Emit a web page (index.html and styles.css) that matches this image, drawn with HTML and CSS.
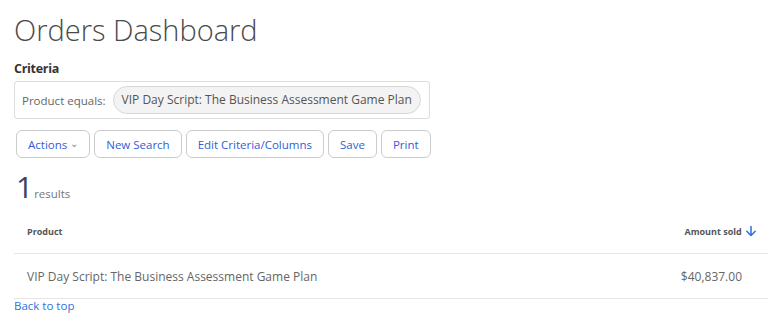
FILE: index.html
```html
<!DOCTYPE html>
<html lang="en">
<head>
    <meta charset="UTF-8">
    <meta name="viewport" content="width=device-width, initial-scale=1.0">
    <title>Orders Dashboard</title>
    <link rel="stylesheet" href="styles.css">
</head>
<body>
    <h1 class="page-title">Orders Dashboard</h1>

    <div class="criteria">
        <h4 class="criteria-label">Criteria</h4>
        <div class="criteria-box">
            <span class="criteria-field">Product equals:</span>
            <span class="chip">VIP Day Script: The Business Assessment Game Plan</span>
        </div>
    </div>

    <div class="toolbar">
        <button class="btn">Actions <span class="caret">&#8964;</span></button>
        <button class="btn">New Search</button>
        <button class="btn">Edit Criteria/Columns</button>
        <button class="btn">Save</button>
        <button class="btn">Print</button>
    </div>

    <div class="count"><span class="count-num">1</span><span class="count-label">results</span></div>

    <table class="results">
        <thead>
            <tr>
                <th>Product</th>
                <th class="num">Amount sold
                    <svg class="sort" width="12" height="12" viewBox="0 0 12 12"><path d="M6 1.5v9M1.8 6.3L6 10.5l4.2-4.2" fill="none" stroke="#2f6fe0" stroke-width="1.5" stroke-linecap="round" stroke-linejoin="round"/></svg>
                </th>
            </tr>
        </thead>
        <tbody>
            <tr>
                <td>VIP Day Script: The Business Assessment Game Plan</td>
                <td class="num amount">$40,837.00</td>
            </tr>
        </tbody>
    </table>

    <a class="back" href="#">Back to top</a>
</body>
</html>
```

FILE: styles.css
```css
body { margin: 0; padding: 0 0 0 14px; font-family: "Open Sans", Lato, sans-serif; color: #555; background: #fff; }
.page-title { font-size: 29px; font-weight: 300; margin: 10px 0 0; line-height: 40px; color: #4a4a4a; }
.criteria-label { font-size: 12.5px; font-weight: 700; margin: 11px 0 4px; line-height: 16px; color: #333; letter-spacing: -0.3px; }
.criteria-box { display: inline-flex; align-items: center; gap: 7px; border: 1px solid #ddd; border-radius: 3px; padding: 4px 7px 4px 7px; width: 400px; }
.criteria-field { font-size: 11.5px; color: #666; }
.chip { font-size: 12px; color: #555; background: #f3f3f3; border: 1px solid #d8d8d8; border-radius: 14px; padding: 6px 8px; line-height: 14px; }
.toolbar { display: flex; gap: 4px; margin: 11px 0 0 2px; }
.btn { font-family: inherit; font-size: 11.5px; color: #2f5ed8; background: #fff; border: 1px solid #ccc; border-radius: 6px; height: 28px; padding: 0 11px; }
.caret { font-size: 10px; color: #888; position: relative; top: -2px; }
.count { margin: 14px 0 0 2px; display: flex; align-items: baseline; }
.count-num { font-size: 30px; font-weight: 400; color: #3c4160; line-height: 30px; }
.count-label { font-size: 11.5px; color: #777; margin-left: 1px; }
.results { border-collapse: collapse; width: 100%; margin-top: 9px; }
.results th { font-size: 9px; font-weight: 700; color: #555; text-align: left; padding: 14px 13px 15px; border-bottom: 1px solid #e5e5e5; }
.results td { font-size: 12px; color: #666; padding: 14px 13px 13px; border-bottom: 1px solid #e5e5e5; }
.results .num { text-align: right; padding-right: 11px; white-space: nowrap; }
.results .amount { padding-right: 26px; }
.sort { vertical-align: -2px; margin-left: 1px; }
.back { display: block; font-size: 11.5px; color: #2f6fe0; text-decoration: none; margin-top: -1px; }
```
